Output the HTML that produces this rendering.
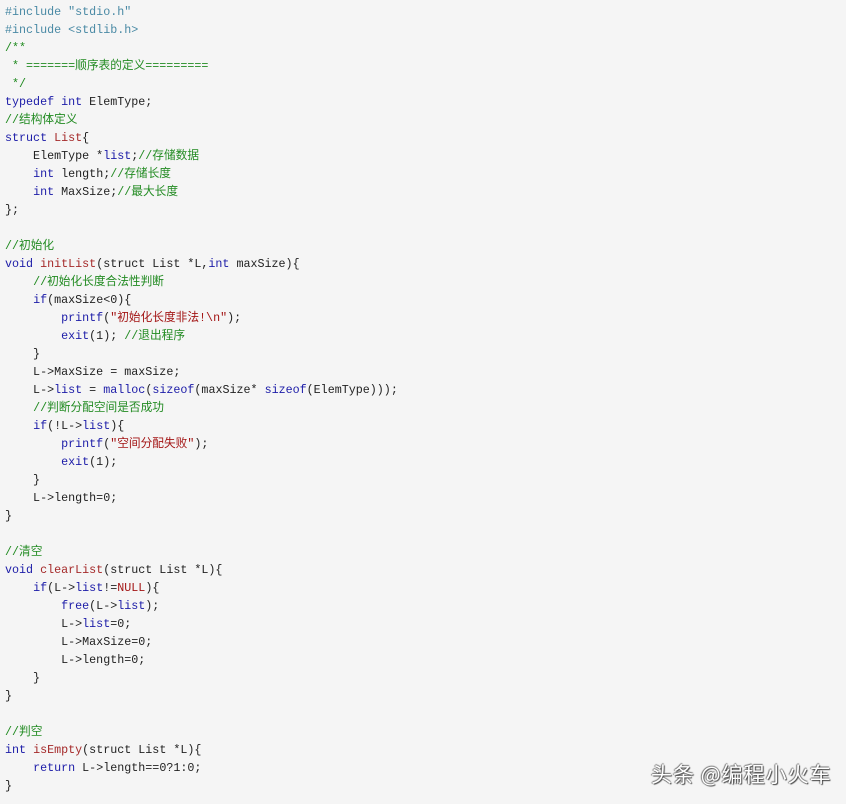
<!DOCTYPE html>
<html><head><meta charset="utf-8"><style>
html,body{margin:0;padding:0}
body{width:846px;height:804px;background:#f5f5f5;position:relative;overflow:hidden}
.l{position:absolute;left:5px;height:18px;line-height:18px;white-space:pre;font-family:"Liberation Mono","Noto Sans CJK SC",monospace;font-size:11.7px;color:#222}
.p{color:#4a8aa5}.k{color:#1c1ca8}.f{color:#a52a2a}.c{color:#228b22}.s{color:#a31515}
.wm{position:absolute;left:651px;top:759px;font-family:"Noto Sans CJK SC",sans-serif;font-size:21px;color:#fff;text-shadow:1px 1px 1px #444,-1px 0 1px #777,0 -1px 1px #777;letter-spacing:1px}
</style></head><body>
<div class="l" style="top:3px"><span class="p">#include "stdio.h"</span></div>
<div class="l" style="top:21px"><span class="p">#include &lt;stdlib.h&gt;</span></div>
<div class="l" style="top:39px"><span class="c">/**</span></div>
<div class="l" style="top:57px"><span class="c"> * =======顺序表的定义=========</span></div>
<div class="l" style="top:75px"><span class="c"> */</span></div>
<div class="l" style="top:93px"><span class="k">typedef int</span> ElemType;</div>
<div class="l" style="top:111px"><span class="c">//结构体定义</span></div>
<div class="l" style="top:129px"><span class="k">struct</span> <span class="f">List</span>{</div>
<div class="l" style="top:147px">    ElemType *<span class="k">list</span>;<span class="c">//存储数据</span></div>
<div class="l" style="top:165px">    <span class="k">int</span> length;<span class="c">//存储长度</span></div>
<div class="l" style="top:183px">    <span class="k">int</span> MaxSize;<span class="c">//最大长度</span></div>
<div class="l" style="top:201px">};</div>
<div class="l" style="top:237px"><span class="c">//初始化</span></div>
<div class="l" style="top:255px"><span class="k">void</span> <span class="f">initList</span>(struct List *L,<span class="k">int</span> maxSize){</div>
<div class="l" style="top:273px">    <span class="c">//初始化长度合法性判断</span></div>
<div class="l" style="top:291px">    <span class="k">if</span>(maxSize&lt;0){</div>
<div class="l" style="top:309px">        <span class="k">printf</span>(<span class="s">"初始化长度非法!\n"</span>);</div>
<div class="l" style="top:327px">        <span class="k">exit</span>(1); <span class="c">//退出程序</span></div>
<div class="l" style="top:345px">    }</div>
<div class="l" style="top:363px">    L-&gt;MaxSize = maxSize;</div>
<div class="l" style="top:381px">    L-&gt;<span class="k">list</span> = <span class="k">malloc</span>(<span class="k">sizeof</span>(maxSize* <span class="k">sizeof</span>(ElemType)));</div>
<div class="l" style="top:399px">    <span class="c">//判断分配空间是否成功</span></div>
<div class="l" style="top:417px">    <span class="k">if</span>(!L-&gt;<span class="k">list</span>){</div>
<div class="l" style="top:435px">        <span class="k">printf</span>(<span class="s">"空间分配失败"</span>);</div>
<div class="l" style="top:453px">        <span class="k">exit</span>(1);</div>
<div class="l" style="top:471px">    }</div>
<div class="l" style="top:489px">    L-&gt;length=0;</div>
<div class="l" style="top:507px">}</div>
<div class="l" style="top:543px"><span class="c">//清空</span></div>
<div class="l" style="top:561px"><span class="k">void</span> <span class="f">clearList</span>(struct List *L){</div>
<div class="l" style="top:579px">    <span class="k">if</span>(L-&gt;<span class="k">list</span>!=<span class="s">NULL</span>){</div>
<div class="l" style="top:597px">        <span class="k">free</span>(L-&gt;<span class="k">list</span>);</div>
<div class="l" style="top:615px">        L-&gt;<span class="k">list</span>=0;</div>
<div class="l" style="top:633px">        L-&gt;MaxSize=0;</div>
<div class="l" style="top:651px">        L-&gt;length=0;</div>
<div class="l" style="top:669px">    }</div>
<div class="l" style="top:687px">}</div>
<div class="l" style="top:723px"><span class="c">//判空</span></div>
<div class="l" style="top:741px"><span class="k">int</span> <span class="f">isEmpty</span>(struct List *L){</div>
<div class="l" style="top:759px">    <span class="k">return</span> L-&gt;length==0?1:0;</div>
<div class="l" style="top:777px">}</div>
<div class="wm">头条 @编程小火车</div>
</body></html>
